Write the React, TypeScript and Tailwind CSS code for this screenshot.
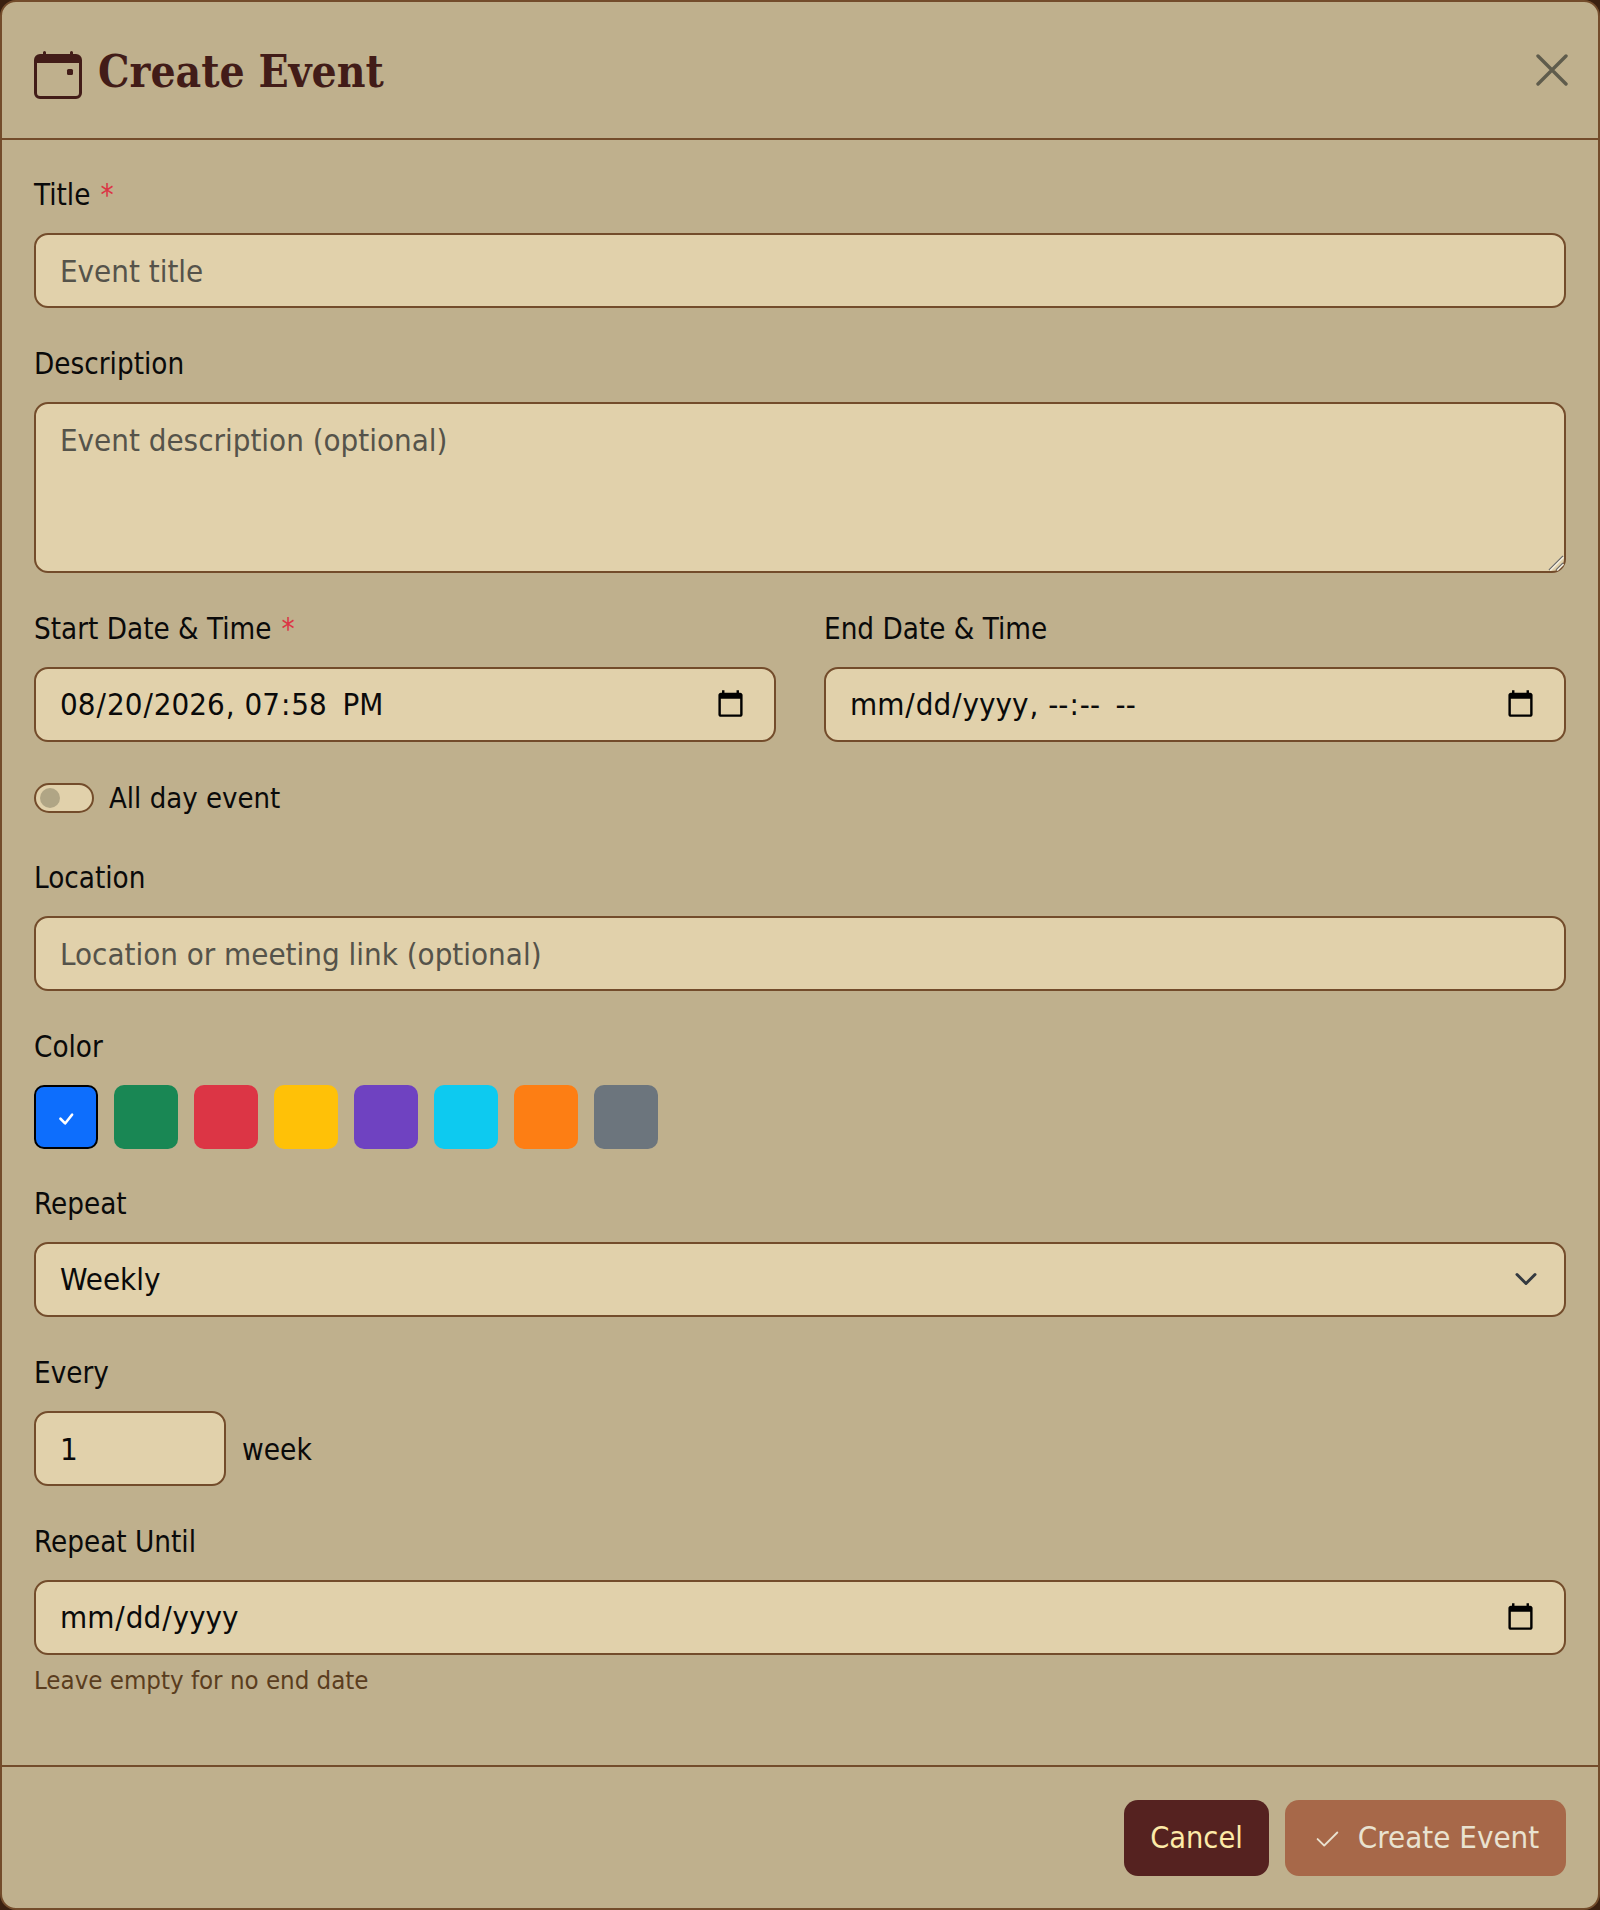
import { BsCalendarEvent, BsCheck, BsCheck2 } from "react-icons/bs";

const colors = [
  "bg-[#0d6efd]",
  "bg-[#198754]",
  "bg-[#dc3545]",
  "bg-[#ffc107]",
  "bg-[#6f42c1]",
  "bg-[#0dcaf0]",
  "bg-[#fd7e14]",
  "bg-[#6c757d]",
];

const control =
  "block w-full h-[75px] px-[24px] text-[31px] leading-[45px] text-[#0a0a0a] bg-[#e1d1ab] border-2 border-[#734c2b] rounded-[14px] outline-none placeholder:text-[#55534a]";

const datePicker = " !pl-[23px] !pr-[26px]";
const dateTime = datePicker + " [&::-webkit-datetime-edit-ampm-field]:ml-[8px]";

function Label({ text, required }: { text: string; required?: boolean }) {
  return (
    <label className="block h-[45px] mb-[16px] text-[29.3px] leading-[47px] text-[#0a0a0a]">
      {text}
      {required && <span className="ml-[10px] text-[#dc3545]">*</span>}
    </label>
  );
}

export default function App() {
  return (
    <div className="h-[1910px] bg-[#3a2010] font-['DejaVu_Sans_Condensed','DejaVu_Sans',sans-serif] font-stretch-condensed">
      <div className="h-full flex flex-col bg-[#bfb08d] border-2 border-[#734c2b] rounded-[16px] overflow-hidden">
        <div className="h-[138px] shrink-0 flex items-center justify-between pl-[32px] pr-[30px] border-b-2 border-[#734c2b]">
          <div className="flex items-center gap-[16px]">
            <BsCalendarEvent className="w-[48px] h-[48px] mt-[10px] text-[#421c18]" />
            <h1 className="pt-[4px] font-['DejaVu_Serif_Condensed','DejaVu_Serif',serif] font-bold text-[44px] text-[#421c18]">
              Create Event
            </h1>
          </div>
          <button className="w-[32px] h-[32px] text-[#5f5c4c]">
            <svg viewBox="0 0 32 32" className="w-[32px] h-[32px]" fill="none" stroke="currentColor" strokeWidth="3.4" strokeLinecap="round">
              <path d="M2 2 L30 30 M30 2 L2 30" />
            </svg>
          </button>
        </div>

        <div className="flex-1 px-[32px] pt-[32px]">
          <div className="mb-[33px]">
            <Label text="Title" required />
            <input className={control} placeholder="Event title" />
          </div>
          <div className="mb-[33px]">
            <Label text="Description" />
            <div className="relative">
              <textarea
                className={control + " h-[171px] pt-[14px] resize-none"}
                placeholder="Event description (optional)"
              />
              <svg viewBox="0 0 16 16" className="absolute right-[2px] bottom-[2px] w-[16px] h-[16px] pointer-events-none" fill="none" strokeWidth="1.4">
                <path d="M1 15 L15 1 M8 15 L15 8" stroke="#6b6b6b" />
                <path d="M2.2 15.6 L15.6 2.2 M9.2 15.6 L15.6 9.2" stroke="#f4efe2" />
              </svg>
            </div>
          </div>
          <div className="grid grid-cols-2 gap-[48px] mb-[41px]">
            <div>
              <Label text="Start Date & Time" required />
              <input type="datetime-local" className={control + dateTime} defaultValue="2026-08-20T19:58" />
            </div>
            <div>
              <Label text="End Date & Time" />
              <input type="datetime-local" className={control + dateTime} />
            </div>
          </div>
          <div className="flex items-center gap-[15px] h-[30px] mb-[42px]">
            <div className="w-[60px] h-[30px] flex items-center pl-[4px] bg-[#e1d1ab] border-2 border-[#734c2b] rounded-full">
              <div className="w-[20px] h-[20px] rounded-full bg-[#b0a585]" />
            </div>
            <span className="text-[29px] leading-[45px] text-[#0a0a0a]">All day event</span>
          </div>
          <div className="mb-[33px]">
            <Label text="Location" />
            <input className={control} placeholder="Location or meeting link (optional)" />
          </div>
          <div className="mb-[32px]">
            <Label text="Color" />
            <div className="flex gap-[16px]">
              {colors.map((c, i) => (
                <div
                  key={c}
                  className={`w-[64px] h-[64px] rounded-[10px] flex items-center justify-center ${c} ${
                    i === 0 ? "border-[2.5px] border-black" : ""
                  }`}
                >
                  {i === 0 && <BsCheck className="w-[28px] h-[28px] mt-[4px] text-white" />}
                </div>
              ))}
            </div>
          </div>
          <div className="mb-[33px]">
            <Label text="Repeat" />
            <div className="relative">
              <select className={control + " appearance-none"} defaultValue="weekly">
                <option value="none">Does not repeat</option>
                <option value="weekly">Weekly</option>
              </select>
              <svg
                viewBox="0 0 16 16"
                className="absolute right-[28px] top-[25px] w-[24px] h-[24px] pointer-events-none"
                fill="none"
                stroke="#343a40"
                strokeWidth="2"
                strokeLinecap="round"
                strokeLinejoin="round"
              >
                <path d="m2 5 6 6 6-6" />
              </svg>
            </div>
          </div>
          <div className="mb-[33px]">
            <Label text="Every" />
            <div className="flex items-center gap-[16px]">
              <input type="number" className={control + " !w-[192px]"} defaultValue={1} />
              <span className="mt-[3px] text-[29.5px] leading-[45px] text-[#0a0a0a]">week</span>
            </div>
          </div>
          <div>
            <Label text="Repeat Until" />
            <input type="date" className={control + datePicker} />
            <p className="mt-[6px] text-[25.6px] leading-[39px] text-[#5a3d1e]">Leave empty for no end date</p>
          </div>
        </div>

        <div className="h-[143px] shrink-0 flex items-center justify-end gap-[16px] pr-[32px] border-t-2 border-[#734c2b]">
          <button className="h-[76px] w-[145px] rounded-[14px] bg-[#552220] text-[30.4px] text-[#fdeaa8]">
            Cancel
          </button>
          <button className="h-[76px] w-[281px] flex items-center justify-center gap-[16px] rounded-[14px] bg-[#a76849] text-[31px] text-[#e9e2d0]">
            <BsCheck2 className="w-[30px] h-[30px] mt-[4px]" />
            Create Event
          </button>
        </div>
      </div>
    </div>
  );
}
